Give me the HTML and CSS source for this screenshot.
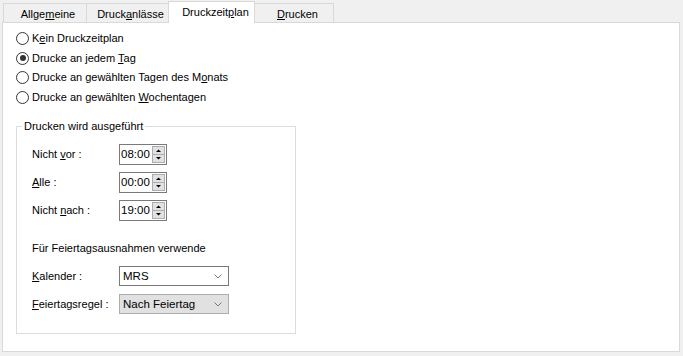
FILE: index.html
```html
<!DOCTYPE html>
<html lang="de">
<head>
<meta charset="utf-8">
<title>Druckzeitplan</title>
<link rel="stylesheet" href="styles.css">
</head>
<body>
<div class="tabs">
  <div class="tab t1">Allge<u>m</u>eine</div>
  <div class="tab t2">Druck<u>a</u>nlässe</div>
  <div class="tab active">Druckzeit<u>p</u>lan</div>
  <div class="tab t4"><u>D</u>rucken</div>
</div>
<div class="panel">
  <div class="radios">
    <div class="radio"><span class="circle"></span><span>K<u>e</u>in Druckzeitplan</span></div>
    <div class="radio checked"><span class="circle"></span><span>Drucke an jedem <u>T</u>ag</span></div>
    <div class="radio"><span class="circle"></span><span>Drucke an gewählten Tagen des M<u>o</u>nats</span></div>
    <div class="radio"><span class="circle"></span><span>Drucke an gewählten <u>W</u>ochentagen</span></div>
  </div>
  <fieldset class="group">
    <legend>Drucken wird ausgeführt</legend>
    <div class="times">
      <span class="lbl">Nicht <u>v</u>or :</span>
      <div class="spin-edit"><span class="val">08:00</span><svg class="spin" width="13" height="17" viewBox="0 0 13 17"><rect x="0.5" y="0.5" width="12" height="16" fill="#e1e1e1" stroke="#adadad"/><line x1="0.5" y1="8.5" x2="12.5" y2="8.5" stroke="#adadad"/><polygon points="4,6 9,6 6.5,3.5" fill="#000"/><polygon points="4,11 9,11 6.5,13.5" fill="#000"/></svg></div>
      <span class="lbl"><u>A</u>lle :</span>
      <div class="spin-edit"><span class="val">00:00</span><svg class="spin" width="13" height="17" viewBox="0 0 13 17"><rect x="0.5" y="0.5" width="12" height="16" fill="#e1e1e1" stroke="#adadad"/><line x1="0.5" y1="8.5" x2="12.5" y2="8.5" stroke="#adadad"/><polygon points="4,6 9,6 6.5,3.5" fill="#000"/><polygon points="4,11 9,11 6.5,13.5" fill="#000"/></svg></div>
      <span class="lbl">Nicht <u>n</u>ach :</span>
      <div class="spin-edit"><span class="val">19:00</span><svg class="spin" width="13" height="17" viewBox="0 0 13 17"><rect x="0.5" y="0.5" width="12" height="16" fill="#e1e1e1" stroke="#adadad"/><line x1="0.5" y1="8.5" x2="12.5" y2="8.5" stroke="#adadad"/><polygon points="4,6 9,6 6.5,3.5" fill="#000"/><polygon points="4,11 9,11 6.5,13.5" fill="#000"/></svg></div>
    </div>
    <div class="note">Für Feiertagsausnahmen verwende</div>
    <div class="combos">
      <span class="lbl"><u>K</u>alender :</span>
      <div class="combo"><span>MRS</span><svg class="chev" width="8" height="5" viewBox="0 0 8 5"><polyline points="0.5,0.5 4,4 7.5,0.5" fill="none" stroke="#7a7a7a"/></svg></div>
      <span class="lbl"><u>F</u>eiertagsregel :</span>
      <div class="combo grey"><span>Nach Feiertag</span><svg class="chev" width="8" height="5" viewBox="0 0 8 5"><polyline points="0.5,0.5 4,4 7.5,0.5" fill="none" stroke="#7a7a7a"/></svg></div>
    </div>
  </fieldset>
</div>
</body>
</html>
```
FILE: styles.css
```css
html, body {
  margin: 0;
  padding: 0;
}
body {
  width: 683px;
  height: 356px;
  overflow: hidden;
  background: #f0f0f0;
  font-family: "Liberation Sans", Arial, sans-serif;
  font-size: 11px;
  color: #000;
}
u {
  text-decoration: underline;
  text-underline-offset: 1px;
}
.tabs {
  display: flex;
  align-items: flex-end;
  height: 22px;
  padding-left: 3px;
  position: relative;
  z-index: 2;
}
.tab {
  box-sizing: border-box;
  height: 19px;
  border: 1px solid #d9d9d9;
  border-bottom: none;
  border-right: none;
  background: #f0f0f0;
  line-height: 13px;
  padding-top: 4px;
  padding-left: 6px;
  text-align: center;
  white-space: nowrap;
}
.t1 { width: 83px; }
.t2 { width: 82px; }
.active {
  width: 87px;
  height: 22px;
  margin-bottom: -1px;
  background: #fff;
  border-right: 1px solid #d9d9d9;
  padding-left: 8px;
}
.t4 {
  width: 79px;
  border-left: none;
  border-right: 1px solid #d9d9d9;
  padding-left: 7px;
}
.panel {
  box-sizing: border-box;
  margin-left: 2px;
  width: 678px;
  height: 330px;
  border: 1px solid #d9d9d9;
  background: #fff;
  position: relative;
  z-index: 1;
}
.radios {
  padding: 6px 0 0 13px;
}
.radio {
  display: flex;
  align-items: center;
  height: 19.5px;
  line-height: 13px;
}
.circle {
  box-sizing: border-box;
  width: 13px;
  height: 13px;
  border: 1px solid #333;
  border-radius: 50%;
  background: #fff;
  margin-right: 3px;
  display: flex;
  align-items: center;
  justify-content: center;
}
.checked .circle::after {
  content: "";
  width: 6px;
  height: 6px;
  border-radius: 50%;
  background: #333;
}
.group {
  box-sizing: border-box;
  margin: 12px 0 0 13px;
  padding: 0 0 0 15px;
  width: 280px;
  height: 215px;
  border: 1px solid #dcdcdc;
  min-inline-size: 0;
}
.group legend {
  margin-left: -10px;
  padding: 0 2px;
  line-height: 14px;
}
.times {
  display: grid;
  grid-template-columns: 87px 48px;
  grid-auto-rows: 21px;
  row-gap: 7px;
  align-items: center;
  margin-top: 11px;
}
.lbl {
  line-height: 13px;
  white-space: nowrap;
}
.spin-edit {
  box-sizing: border-box;
  height: 21px;
  border: 1px solid #7a7a7a;
  background: #fff;
  display: flex;
  align-items: center;
  padding-left: 1px;
}
.val {
  flex: 1;
  font-size: 11.5px;
  line-height: 13px;
}
.spin {
  display: block;
  margin-right: 1px;
}
.note {
  margin-top: 20px;
  line-height: 14px;
}
.combos {
  display: grid;
  grid-template-columns: 87px 110px;
  grid-auto-rows: 20px;
  row-gap: 8px;
  align-items: center;
  margin-top: 11px;
}
.combo {
  box-sizing: border-box;
  height: 20px;
  border: 1px solid #7a7a7a;
  background: #fff;
  display: flex;
  align-items: center;
  justify-content: space-between;
  padding: 0 6px 0 3px;
  font-size: 11.5px;
}
.combo.grey {
  background: #e1e1e1;
  border-color: #adadad;
}
.chev {
  display: block;
}
```
